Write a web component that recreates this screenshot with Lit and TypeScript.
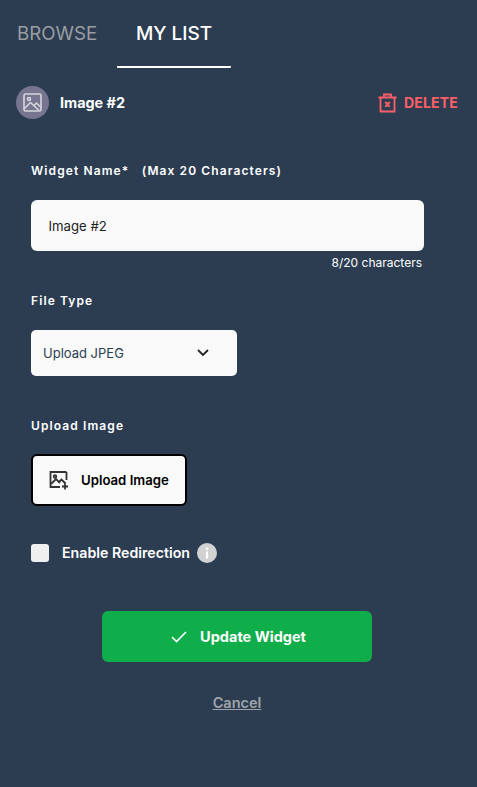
import { LitElement, html, css } from "lit";
import { customElement } from "lit/decorators.js";

@customElement("app-root")
export class AppRoot extends LitElement {
  static styles = css`
    :host { display: block; width: 477px; height: 787px; background: #2c3d52; font-family: Inter, "Liberation Sans", sans-serif; color: #fff; overflow: hidden; box-sizing: border-box; }
    .tabs { display: flex; height: 68px; padding-left: 17px; }
    .tab { line-height: 22px; padding-top: 23px; box-sizing: border-box; height: 68px; }
    .browse { color: #9a9ea3; width: 100px; font-size: 18.7px; }
    .mylist { width: 114px; text-align: center; font-size: 19px; font-weight: 500; border-bottom: 2px solid #fff; border-radius: 1px; }
    .head { display: flex; align-items: center; justify-content: space-between; padding: 18px 19px 0 16px; height: 33px; }
    .who { display: flex; align-items: center; gap: 11px; font-size: 14.4px; font-weight: 700; }
    .circle { width: 33px; height: 33px; border-radius: 50%; background: #77758f; display: flex; align-items: center; justify-content: center; }
    .delete { display: flex; align-items: center; gap: 7px; color: #ff5f67; font-size: 14px; font-weight: 700; letter-spacing: 0.2px; }
    .form { padding: 45px 0 0 31px; display: flex; flex-direction: column; align-items: flex-start; }
    .label { font-size: 12px; font-weight: 600; letter-spacing: 1.1px; line-height: 14px; white-space: pre; }
    .input { margin-top: 22px; width: 393px; height: 51px; background: #f9f9f9; border-radius: 6px; color: #222; font-size: 13.2px; display: flex; align-items: center; padding-left: 17.500px; box-sizing: border-box; }
    .count { width: 391px; text-align: right; font-size: 12px; line-height: 14px; margin-top: 5px; }
    .ft { margin-top: 24px; }
    .select { margin-top: 22px; width: 206px; height: 46px; background: #f9f9f9; border-radius: 5px; color: #2c3d52; font-size: 13px; display: flex; align-items: center; justify-content: space-between; padding: 0 28px 0 12px; box-sizing: border-box; }
    .ui { margin-top: 43px; }
    .upload { margin-top: 21px; width: 156px; height: 52px; background: #f9f9f9; border: 2px solid #000; border-radius: 6px; color: #000; font-size: 13.2px; font-weight: 600; display: flex; align-items: center; gap: 12px; padding-left: 16px; box-sizing: border-box; }
    .redir { margin-top: 37px; display: flex; align-items: center; height: 20px; font-size: 14.2px; font-weight: 600; line-height: 18px; }
    .check { width: 18px; height: 18px; background: #efefef; border-radius: 3px; margin-right: 13px; }
    .info { margin-left: 7px; width: 20px; height: 20px; margin-top: -1px; }
    .actions { display: flex; flex-direction: column; align-items: center; width: 474px; margin-top: 48px; }
    .update { width: 270px; height: 51px; border-radius: 6px; background: #10ad4b; display: flex; align-items: center; justify-content: center; gap: 13px; padding-left: 3px; box-sizing: border-box; font-size: 14.5px; font-weight: 700; }
    .cancel { margin-top: 32px; color: #a0a4a9; font-size: 14.5px; font-weight: 600; text-decoration: underline; line-height: 17px; }
  `;

  render() {
    return html`
      <div class="tabs">
        <div class="tab browse">BROWSE</div>
        <div class="tab mylist">MY LIST</div>
      </div>
      <div class="head">
        <div class="who">
          <div class="circle">
            <svg width="19" height="19" viewBox="0 0 19 19" fill="none" stroke="#d6d6dc" stroke-width="1.6" stroke-linejoin="round">
              <rect x="1" y="1" width="17" height="17" rx="1.500"/>
              <circle cx="6" cy="6" r="1.500"/>
              <path d="M1.500 15.500l6-6 8.500 8M11 12.500l2.500-2.500 4.500 4.500"/>
            </svg>
          </div>
          <span>Image #2</span>
        </div>
        <div class="delete">
          <svg width="19" height="20" viewBox="0 0 19 20" fill="none" stroke="#ff5f67" stroke-width="1.8">
            <path d="M0.500 4.500h18M6 4.500V1.500h7v3M2.500 4.500V18.500h14V4.500"/>
            <path d="M7.300 8.800l4.400 5M11.700 8.800l-4.400 5" stroke-width="2"/>
          </svg>
          <span>DELETE</span>
        </div>
      </div>
      <div class="form">
        <div class="label">Widget Name*   (Max 20 Characters)</div>
        <div class="input">Image #2</div>
        <div class="count">8/20 characters</div>
        <div class="label ft">File Type</div>
        <div class="select">
          <span>Upload JPEG</span>
          <svg width="12" height="8" viewBox="0 0 12 8" fill="none" stroke="#222" stroke-width="1.8"><path d="M1 1l5 5 5-5"/></svg>
        </div>
        <div class="label ui">Upload Image</div>
        <div class="upload">
          <svg width="20" height="20" viewBox="0 0 20 20" fill="none" stroke="#333" stroke-width="1.800">
            <path d="M11 2H1.500v15H11M17.500 2v8M11 2h6.500"/>
            <circle cx="6" cy="6.500" r="1.300"/>
            <path d="M2 14l5-5 4 4M10.500 11.500l2-2 4 4M16 13.500v6M13 16.500h6"/>
          </svg>
          <span>Upload Image</span>
        </div>
        <div class="redir">
          <div class="check"></div>
          <span>Enable Redirection</span>
          <svg class="info" viewBox="0 0 20 20">
            <circle cx="10" cy="10" r="10" fill="#d2d2d2"/>
            <circle cx="10" cy="5.800" r="1.300" fill="#fff"/>
            <rect x="8.900" y="8.500" width="2.200" height="7" fill="#fff"/>
          </svg>
        </div>
      </div>
      <div class="actions">
        <div class="update">
          <svg width="16" height="12" viewBox="0 0 16 12" fill="none" stroke="#fff" stroke-width="1.6"><path d="M1 6l4.500 4.500L15 1"/></svg>
          <span>Update Widget</span>
        </div>
        <div class="cancel">Cancel</div>
      </div>
    `;
  }
}
